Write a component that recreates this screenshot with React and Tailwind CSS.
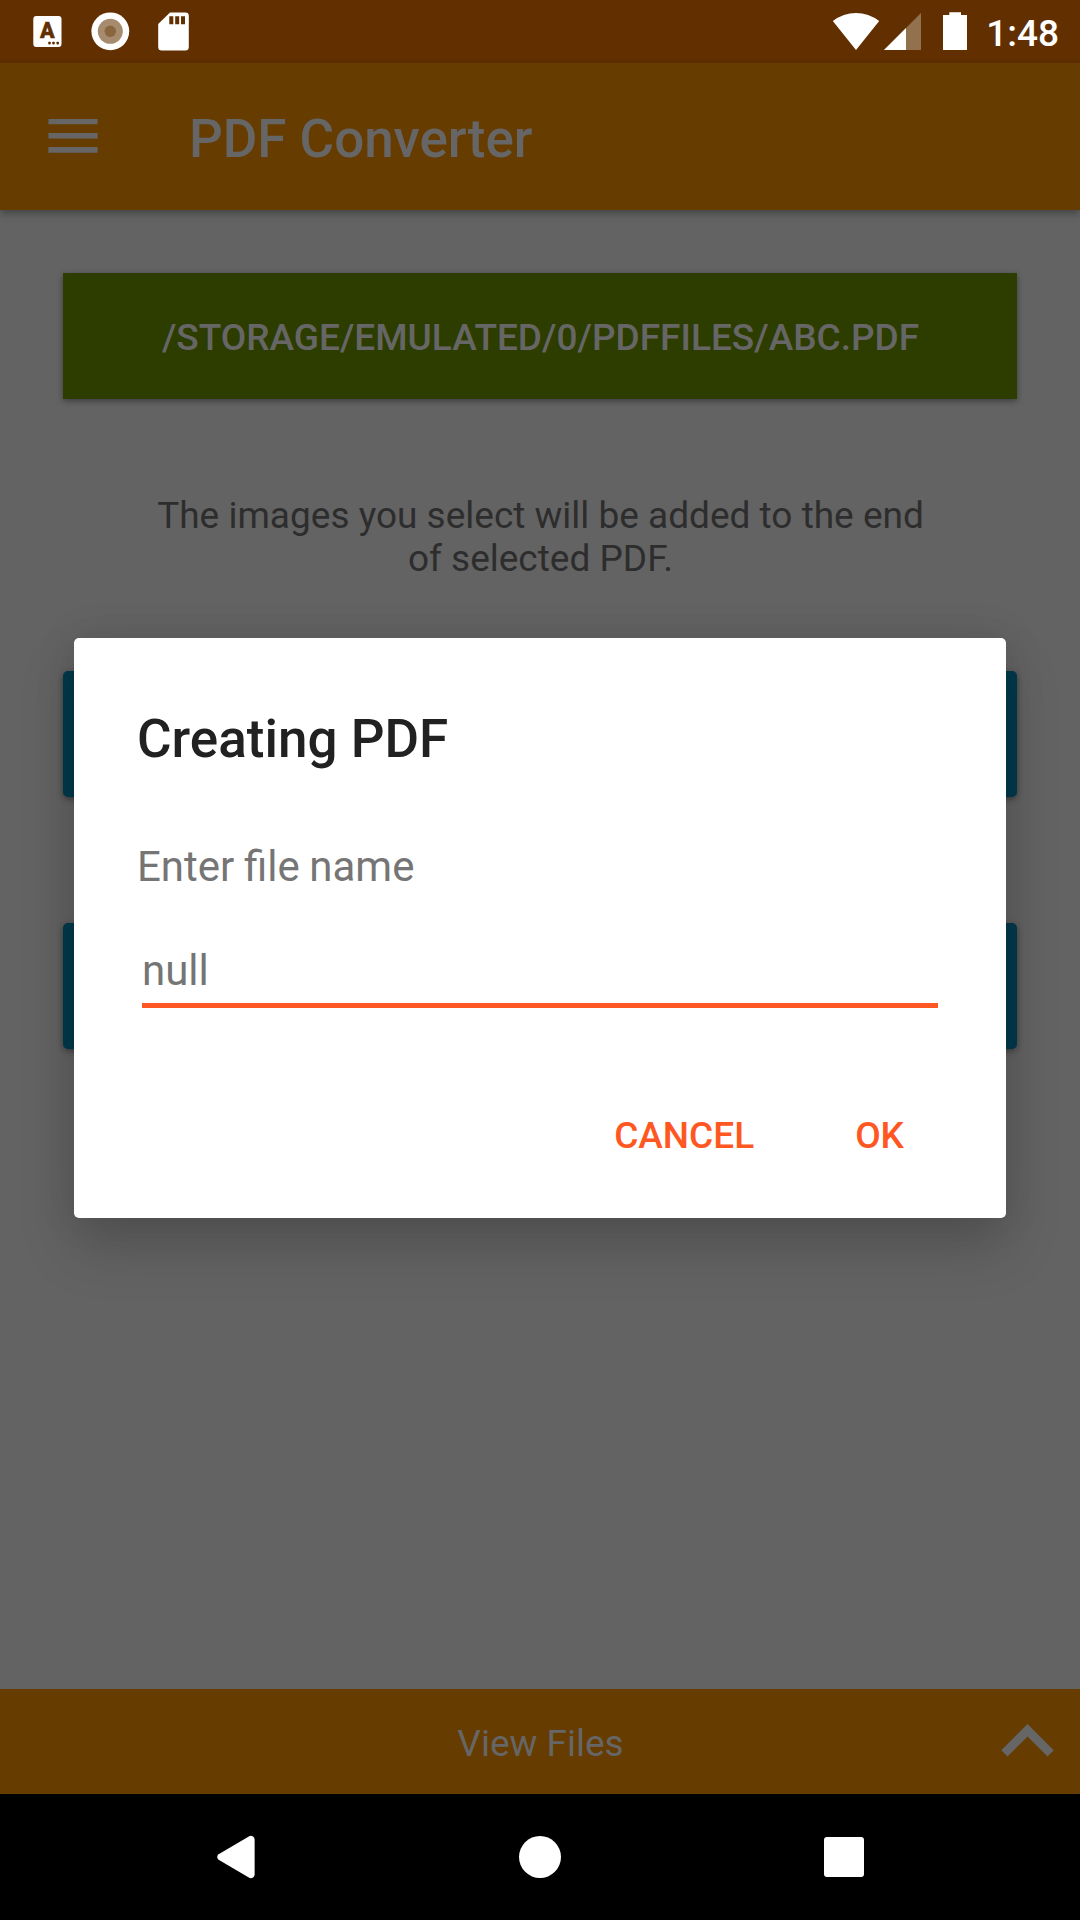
function StatusBar() {
  return (
    <header className="flex h-[63px] shrink-0 items-center justify-between bg-[#623000] pl-[33px] pr-[21px] text-white">
      <div className="flex h-full items-center">
        <svg width="29" height="63" viewBox="33 0 29 63">
          <rect x="33.3" y="16" width="28.2" height="31" rx="3" fill="#fff" />
          <text x="47.4" y="38.4" textAnchor="middle" fontFamily="Roboto" fontWeight="900" fontSize="21.5" fill="#623000" stroke="#623000" strokeWidth="0.4">A</text>
          <rect x="48.2" y="41.8" width="2.6" height="2.6" rx="0.8" fill="#623000" />
          <rect x="52.2" y="41.8" width="2.6" height="2.6" rx="0.8" fill="#623000" />
          <rect x="56.4" y="41.8" width="2.6" height="2.6" rx="0.8" fill="#623000" />
        </svg>
        <svg className="ml-[29px]" width="39" height="63" viewBox="91 0 39 63">
          <circle cx="110.3" cy="31.3" r="18.9" fill="#fff" />
          <circle cx="110.3" cy="31.3" r="12.5" fill="#a68b6e" />
          <circle cx="110.3" cy="31.3" r="5.7" fill="#896540" />
        </svg>
        <svg className="ml-7" width="31" height="63" viewBox="158 0 31 63">
          <path d="M170 12.5H185.5A3.3 3.3 0 0 1 188.8 15.8V47A3.5 3.5 0 0 1 185.3 50.5H161.7A3.5 3.5 0 0 1 158.2 47V24Z" fill="#fff" />
          <path d="M169.3 16.2h4v8h-4zM175.2 16.2h4v8h-4zM181 16.2h4v8h-4z" fill="#623000" />
        </svg>
      </div>
      <div className="flex h-full items-center">
        <svg width="135" height="63" viewBox="832 0 135 63">
          <path d="M832.8 21Q843.5 13 856 13T879.2 21L856 50Z" fill="#fff" />
          <path d="M921 13V50H884Z" fill="#92714f" />
          <path d="M906 28V50H884Z" fill="#fff" />
          <path d="M949.3 12.3H961V15H967V50H943V15H949.3Z" fill="#fff" />
        </svg>
        <span className="ml-[19px] pt-[4px] text-[37px] font-medium leading-[44px]">1:48</span>
      </div>
    </header>
  );
}

function AppBar() {
  return (
    <div className="relative flex h-[147px] shrink-0 items-center bg-[#663c00] pl-[48px] text-[#666] shadow-[0_3px_8px_rgba(0,0,0,0.35)]">
      <svg className="mb-px" width="50" height="34" viewBox="48 119 50 34" fill="currentColor">
        <path d="M48.4 119h49.2v5.3H48.4zM48.4 133h49.2v5.5H48.4zM48.4 147h49.2v5.8H48.4z" />
      </svg>
      <h1 className="ml-[91px] pt-[5px] text-[53px] font-medium leading-[62px] tracking-[-0.05px]">PDF Converter</h1>
    </div>
  );
}

function Content() {
  return (
    <main className="flex grow flex-col bg-[#636363] px-[63px] pt-[63px]">
      <button className="h-[126px] shrink-0 bg-[#2d3d00] pl-px pt-[3px] text-[37px] font-medium leading-[44px] text-[#666] shadow-[0_2px_6px_rgba(0,0,0,0.4)]">
        /STORAGE/EMULATED/0/PDFFILES/ABC.PDF
      </button>
      <p className="mt-[95px] pl-px text-center text-[37px] leading-[43px] text-[#2d2d2d]">
        The images you select will be added to the end
        <br />
        of selected PDF.
      </p>
      <div className="mt-[91px] h-[126px] shrink-0 rounded-[5px] bg-[#003a4d] shadow-[0_2px_6px_rgba(0,0,0,0.4)]" />
      <div className="mt-[126px] h-[126px] shrink-0 rounded-[5px] bg-[#003a4d] shadow-[0_2px_6px_rgba(0,0,0,0.4)]" />
    </main>
  );
}

function ViewFilesBar() {
  return (
    <div className="grid h-[105px] shrink-0 grid-cols-[1fr_auto_1fr] items-center bg-[#663c00] text-[#666]">
      <span className="col-start-2 pl-px pt-[4px] text-[37px] leading-[44px]">View Files</span>
      <svg className="mb-[2px] mr-[26px] justify-self-end" width="53" height="33" viewBox="1001 1724 53 33" fill="currentColor">
        <path d="M1027.5 1724L1053.7 1750.3L1047.5 1756.5L1027.5 1736.5L1007.5 1756.5L1001.3 1750.3Z" />
      </svg>
    </div>
  );
}

function NavigationBar() {
  return (
    <nav className="flex h-[126px] shrink-0 items-center bg-black">
      <svg className="ml-[217px]" width="38" height="126" viewBox="217 1794 38 126" fill="#fff">
        <path d="M218.6 1854.2L248.8 1836.4Q251 1835.2 253 1836.4Q254.6 1837.4 254.6 1839.5V1874.5Q254.6 1876.6 253 1877.6Q251 1878.8 248.8 1877.6L218.6 1859.8Q217.2 1858.6 217.2 1857Q217.2 1855.4 218.6 1854.2Z" />
      </svg>
      <div className="ml-[264px] size-[42px] rounded-full bg-white" />
      <div className="ml-[263px] size-[40px] rounded-[3px] bg-white" />
    </nav>
  );
}

function FileNameDialog() {
  return (
    <section
      role="dialog"
      className="absolute left-[74px] top-[638px] flex h-[580px] w-[932px] flex-col rounded-[5px] bg-white px-[63px] pt-[70px] shadow-[0_30px_55px_rgba(0,0,0,0.17),0_0_42px_rgba(0,0,0,0.10)]"
    >
      <h2 className="text-[53px] font-medium leading-[62px] text-[#212121]">Creating PDF</h2>
      <p className="mt-[72px] text-[42px] leading-[50px] text-[#757575] [word-spacing:-0.8px]">
        Enter file name
      </p>
      <div className="mx-[5px] mt-[54px] border-b-[5px] border-[#ff5722] pb-[7px] text-[42px] leading-[50px] text-[#757575]">
        null
      </div>
      <div className="mt-[106px] flex justify-end gap-[101px] pr-[39px] text-[37px] font-medium leading-[44px] text-[#ff5722]">
        <button>CANCEL</button>
        <button>OK</button>
      </div>
    </section>
  );
}

export default function App() {
  return (
    <div className="relative flex h-[1920px] w-[1080px] flex-col overflow-hidden font-[Roboto,sans-serif]">
      <StatusBar />
      <AppBar />
      <Content />
      <ViewFilesBar />
      <NavigationBar />
      <FileNameDialog />
    </div>
  );
}
